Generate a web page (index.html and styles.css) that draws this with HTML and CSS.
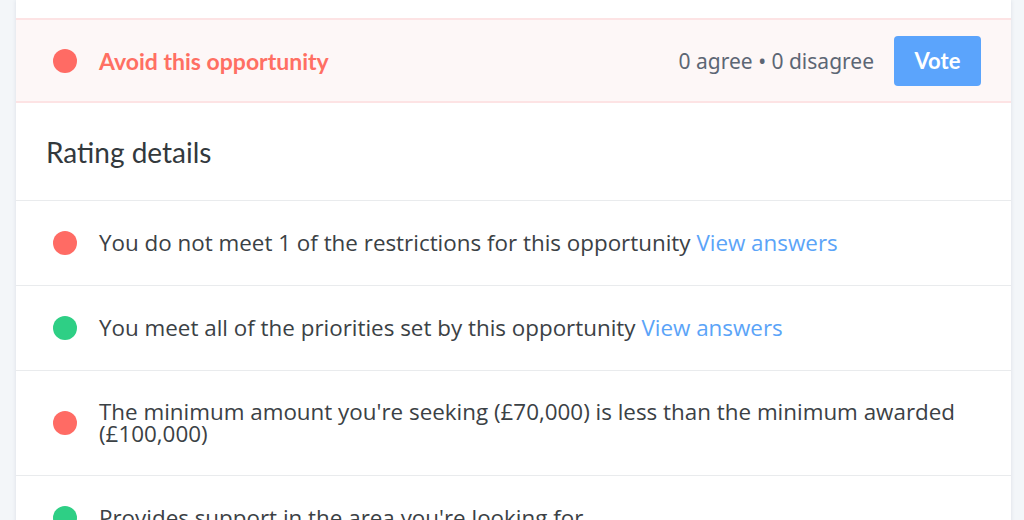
FILE: index.html
```html
<!DOCTYPE html>
<html lang="en">
<head>
<meta charset="utf-8">
<title>Rating details</title>
<link rel="stylesheet" href="styles.css">
</head>
<body>
<div class="card">
  <div class="card-top"></div>
  <div class="verdict">
    <span class="dot dot-red"></span>
    <span class="verdict-label">Avoid this opportunity</span>
    <span class="verdict-stats">0 agree • 0 disagree</span>
    <button class="vote-btn" type="button">Vote</button>
  </div>
  <div class="section-head">
    <h2 class="section-title">Rating details</h2>
  </div>
  <ul class="details">
    <li class="detail">
      <span class="dot dot-red"></span>
      <p class="detail-text">You do not meet 1 of the restrictions for this opportunity <a class="link" href="#">View answers</a></p>
    </li>
    <li class="detail">
      <span class="dot dot-green"></span>
      <p class="detail-text">You meet all of the priorities set by this opportunity <a class="link" href="#">View answers</a></p>
    </li>
    <li class="detail">
      <span class="dot dot-red"></span>
      <p class="detail-text">The minimum amount you're seeking (£70,000) is less than the minimum awarded (£100,000)</p>
    </li>
    <li class="detail">
      <span class="dot dot-green"></span>
      <p class="detail-text">Provides support in the area you're looking for</p>
    </li>
  </ul>
</div>
</body>
</html>
```

FILE: styles.css
```css
* { box-sizing: border-box; }

html, body {
  margin: 0;
  padding: 0;
  background: #f3f6f9;
  height: 100%;
  overflow: hidden;
}

body {
  padding: 0 13px 0 16px;
  font-family: "Open Sans", "Noto Sans", sans-serif;
  color: #3b4145;
}

.card {
  background: #ffffff;
  box-shadow: 0 0 4px rgba(40, 60, 90, 0.12);
}

.card-top {
  height: 18px;
}

.dot {
  flex: 0 0 24px;
  width: 24px;
  height: 24px;
  border-radius: 50%;
}
.dot-red { background: #ff6b64; }
.dot-green { background: #2ecf85; }

.verdict {
  display: flex;
  align-items: center;
  height: 85px;
  padding: 0 30px 0 37px;
  background: #fdf7f7;
  border-top: 2px solid #fde3e4;
  border-bottom: 2px solid #fde3e4;
}

.verdict-label {
  margin-left: 22px;
  font-family: "Lato", sans-serif;
  font-weight: 700;
  font-size: 23px;
  color: #ff6f63;
  flex: 1;
}

.verdict-stats {
  font-family: "Noto Sans", "Open Sans", sans-serif;
  font-size: 21px;
  color: #5c6674;
  margin-right: 20px;
}

.vote-btn {
  width: 87px;
  height: 50px;
  border: none;
  border-radius: 4px;
  background: #5ba4fc;
  color: #ffffff;
  font-family: "Lato", sans-serif;
  font-weight: 700;
  font-size: 22px;
  padding: 0;
}

.section-head {
  display: flex;
  align-items: center;
  height: 98px;
  padding: 0 30px;
  border-bottom: 1px solid #e9ebed;
}

.section-title {
  margin: 0;
  font-family: "Lato", sans-serif;
  font-weight: 400;
  font-size: 28px;
  color: #33393d;
}

.details {
  list-style: none;
  margin: 0;
  padding: 0;
}

.detail {
  display: flex;
  align-items: center;
  gap: 22px;
  padding: 30px 30px 30px 37px;
  border-bottom: 1px solid #e9ebed;
}

.detail-text {
  margin: 0;
  font-size: 22.4px;
  line-height: 22px;
  color: #3b4145;
}

.link {
  color: #5ba4f8;
  text-decoration: none;
}
```
